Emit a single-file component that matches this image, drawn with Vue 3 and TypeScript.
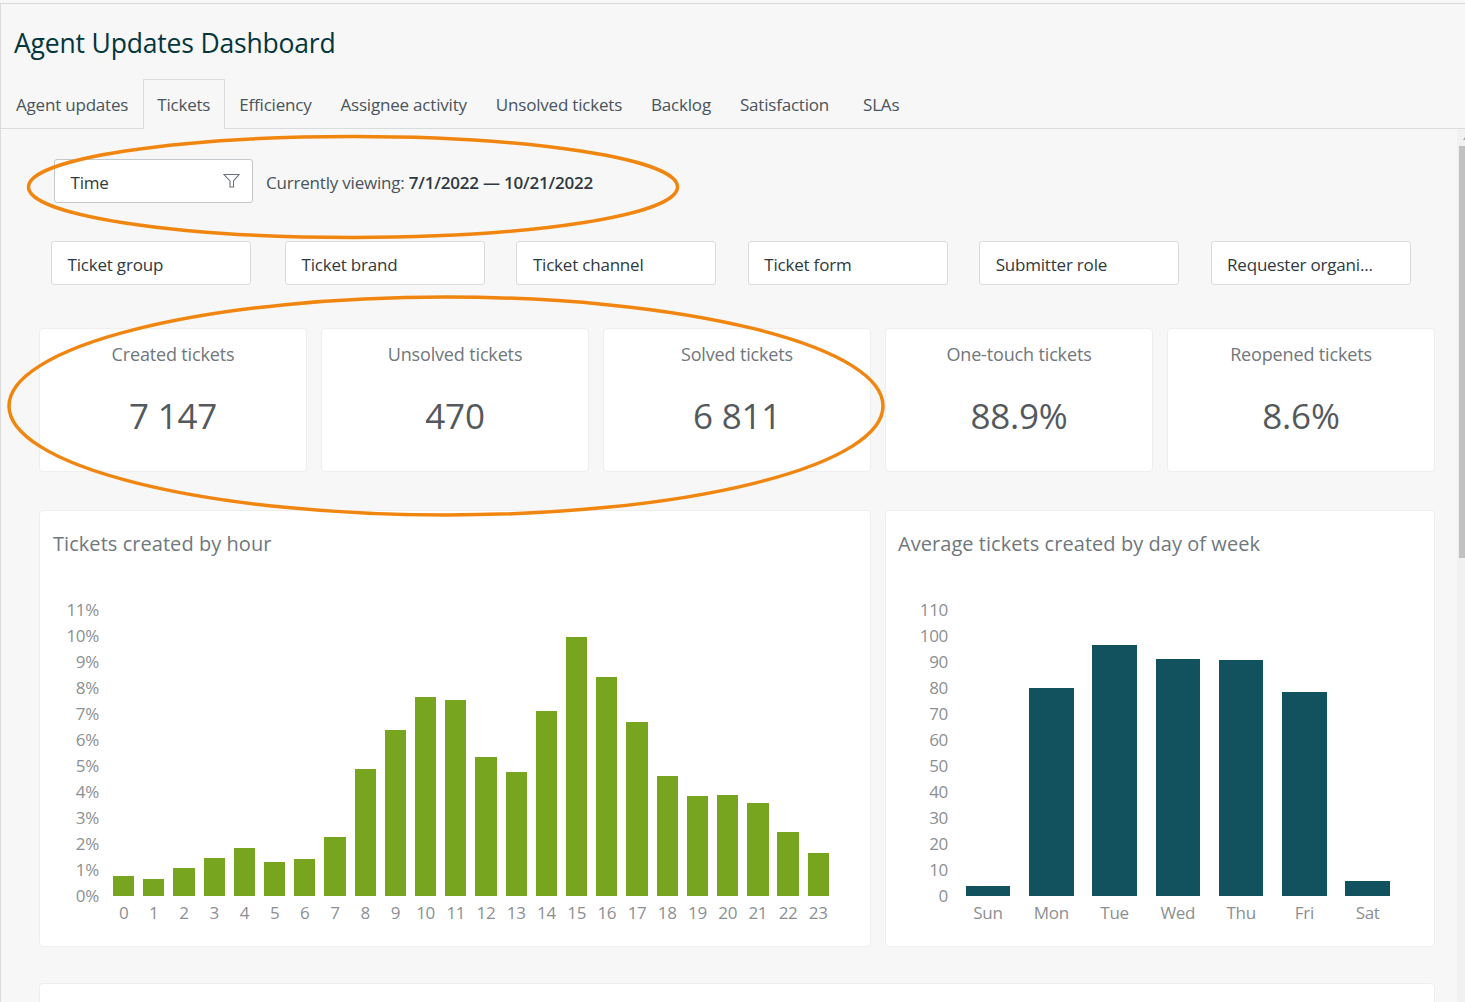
<script setup lang="ts">
const tabs: string[] = ['Agent updates', 'Tickets', 'Efficiency', 'Assignee activity', 'Unsolved tickets', 'Backlog', 'Satisfaction', 'SLAs']
const filters: string[] = ['Ticket group', 'Ticket brand', 'Ticket channel', 'Ticket form', 'Submitter role', 'Requester organi...']
const kpis = [
  { label: 'Created tickets', value: '7 147' },
  { label: 'Unsolved tickets', value: '470' },
  { label: 'Solved tickets', value: '6 811' },
  { label: 'One-touch tickets', value: '88.9%' },
  { label: 'Reopened tickets', value: '8.6%' },
]
const hourTicks = ['11%', '10%', '9%', '8%', '7%', '6%', '5%', '4%', '3%', '2%', '1%', '0%']
const hourHeights = [20, 17, 28, 38, 48, 34, 37, 59, 127, 166, 199, 196, 139, 124, 185, 259, 219, 174, 120, 100, 101, 93, 64, 43]
const dayTicks = ['110', '100', '90', '80', '70', '60', '50', '40', '30', '20', '10', '0']
const days = [
  { name: 'Sun', h: 10 }, { name: 'Mon', h: 208 }, { name: 'Tue', h: 251 }, { name: 'Wed', h: 237 },
  { name: 'Thu', h: 236 }, { name: 'Fri', h: 204 }, { name: 'Sat', h: 15 },
]
</script>

<template>
  <div class="page">
    <header class="head">
      <h1 class="title">Agent Updates Dashboard</h1>
      <nav class="tabs">
        <span v-for="t in tabs" :key="t" class="tab" :class="{ active: t === 'Tickets', last: t === 'SLAs' }">{{ t }}</span>
      </nav>
    </header>
    <div class="body">
      <main class="main">
        <div class="time-row">
          <div class="box time">
            <span>Time</span>
            <svg class="funnel" width="17" height="16" viewBox="0 0 17 16" fill="none" stroke="#68737d" stroke-width="1.100">
              <path d="M1 1.500H16L10.500 8V14H7V8Z" />
            </svg>
          </div>
          <div class="viewing">Currently viewing: <b>7/1/2022 — 10/21/2022</b></div>
        </div>
        <div class="filter-row">
          <div v-for="f in filters" :key="f" class="box filter">{{ f }}</div>
        </div>
        <section class="kpis">
          <div v-for="k in kpis" :key="k.label" class="card kpi">
            <div class="kpi-label">{{ k.label }}</div>
            <div class="kpi-value">{{ k.value }}</div>
          </div>
        </section>
        <section class="charts">
          <div class="card chart">
            <div class="chart-title">Tickets created by hour</div>
            <div class="chart-body">
              <div class="axis axis-hour"><span v-for="t in hourTicks" :key="t">{{ t }}</span></div>
              <div class="plot plot-hour">
                <div class="bars">
                  <div v-for="(h, i) in hourHeights" :key="i" class="slot">
                    <div class="bar green" :style="{ height: h + 'px' }"></div>
                  </div>
                </div>
                <div class="xlabels">
                  <span v-for="(h, i) in hourHeights" :key="i">{{ i }}</span>
                </div>
              </div>
            </div>
          </div>
          <div class="card chart chart-day">
            <div class="chart-title">Average tickets created by day of week</div>
            <div class="chart-body">
              <div class="axis axis-day"><span v-for="t in dayTicks" :key="t">{{ t }}</span></div>
              <div class="plot plot-day">
                <div class="bars">
                  <div v-for="d in days" :key="d.name" class="slot">
                    <div class="bar teal" :style="{ height: d.h + 'px' }"></div>
                  </div>
                </div>
                <div class="xlabels">
                  <span v-for="d in days" :key="d.name">{{ d.name }}</span>
                </div>
              </div>
            </div>
          </div>
        </section>
        <div class="card next"></div>
      </main>
      <div class="scrollbar">
        <div class="arrow"></div>
        <div class="thumb"></div>
      </div>
    </div>
    <svg class="annot" width="1465" height="1002" viewBox="0 0 1465 1002" fill="none" stroke="#f0860f" stroke-width="3.500">
      <ellipse cx="353" cy="187" rx="324.500" ry="50.500" />
      <ellipse cx="446" cy="406" rx="437" ry="109" />
    </svg>
  </div>
</template>

<style>
html, body { margin: 0; background: #f7f7f7; }
</style>

<style scoped>
.page {
  position: relative;
  width: 1465px;
  height: 1002px;
  overflow: hidden;
  box-sizing: border-box;
  padding-top: 3px;
  background: #f7f7f7;
  font-family: "Open Sans", "Noto Sans", sans-serif;
  color: #2f3941;
}
.head {
  border-top: 1px solid #d8d8d8;
  border-left: 1px solid #dcdcdc;
  border-bottom: 1px solid #d8dcde;
  height: 124px;
  box-sizing: content-box;
  display: flex;
  flex-direction: column;
  justify-content: flex-end;
}
.title {
  margin: 0 0 16px 13px;
  font-size: 26.500px;
  line-height: 40px;
  font-weight: 400;
  color: #03363d;
  letter-spacing: -0.18px;
}
.tabs { display: flex; height: 50px; margin-bottom: -1px; padding-left: 0.500px; }
.tab {
  padding: 0 13.500px;
  line-height: 50px;
  font-size: 17px;
  letter-spacing: -0.2px;
  color: #49545c;
  border: 1px solid transparent;
  border-bottom: 0;
  box-sizing: border-box;
}
.tab.active { background: #f7f7f7; border-color: #d8dcde; height: 50px; }
.tab.last { margin-left: 5px; }
.body { display: flex; height: 874px; border-left: 1px solid #dcdcdc; }
.main { flex: 1; min-width: 0; padding: 30px 0 0 38px; }
.box {
  box-sizing: border-box;
  width: 200px;
  height: 44px;
  background: #fff;
  border: 1px solid #d8dcde;
  border-radius: 3px;
  font-size: 17px;
  letter-spacing: -0.2px;
  line-height: 45px;
  padding-left: 15.500px;
  color: #2f3941;
}
.time-row { display: flex; align-items: center; margin-left: 15px; height: 44px; }
.time { display: flex; justify-content: space-between; width: 199px; border-color: #c2c8cc; padding-right: 12px; }
.funnel { margin-top: 13px; }
.viewing { margin: 3px 0 0 13px; font-size: 17px; letter-spacing: -0.2px; color: #49545c; }
.viewing b { font-weight: 600; color: #2f3941; }
.filter-row { display: flex; gap: 31.400px; margin: 38px 0 0 12px; }
.filter-row .box:first-child { margin-right: 2.600px; }
.card {
  background: #fff;
  border: 1px solid #eeeeee;
  border-radius: 4px;
  box-sizing: border-box;
}
.kpis {
  display: grid;
  grid-template-columns: repeat(5, 268px);
  gap: 14px;
  margin-top: 43px;
}
.kpi { height: 144px; text-align: center; }
.kpi-label { margin-top: 12px; font-size: 18px; line-height: 26px; letter-spacing: -0.15px; color: #70777d; }
.kpi-value { margin-top: 24px; font-size: 35px; line-height: 50px; letter-spacing: -0.2px; color: #54595e; }
.charts {
  display: grid;
  grid-template-columns: 832px 550px;
  gap: 14px;
  margin-top: 38px;
}
.chart { height: 437px; padding: 0 13px; }
.chart-day { padding-left: 12px; }
.chart-title { margin-top: 18px; height: 68px; font-size: 20px; line-height: 30px; letter-spacing: 0.05px; color: #70777d; }
.chart-body { display: flex; }
.axis { display: flex; flex-direction: column; text-align: right; font-size: 17px; letter-spacing: -0.3px; color: #8c8f93; }
.axis span { height: 26px; line-height: 26px; }
.axis-hour { width: 46px; }
.axis-day { width: 50px; }
.plot { padding-top: 13px; }
.plot-hour { width: 725px; margin-left: 9.500px; }
.plot-day { width: 443px; margin-left: 8.350px; }
.bars { display: flex; height: 286px; align-items: flex-end; }
.slot { flex: 1; display: flex; justify-content: center; }
.bar { width: 70.500%; }
.green { background: #78a51f; }
.teal { background: #12525e; }
.xlabels { display: flex; margin-top: 4px; font-size: 17px; letter-spacing: -0.3px; line-height: 26px; color: #8c8f93; }
.xlabels span { flex: 1; text-align: center; }
.next { width: 1396px; height: 60px; margin-top: 36px; }
.scrollbar { width: 8px; background: #f1f1f1; display: flex; flex-direction: column; }
.arrow { height: 17px; position: relative; }
.arrow::after {
  content: "";
  position: absolute;
  right: 0;
  top: 8px;
  border-left: 2px solid transparent;
  border-bottom: 3px solid #a8a8a8;
}
.thumb { height: 412px; margin-left: 2px; background: #c1c1c1; }
.annot { position: absolute; left: 0; top: 0; pointer-events: none; }
</style>
